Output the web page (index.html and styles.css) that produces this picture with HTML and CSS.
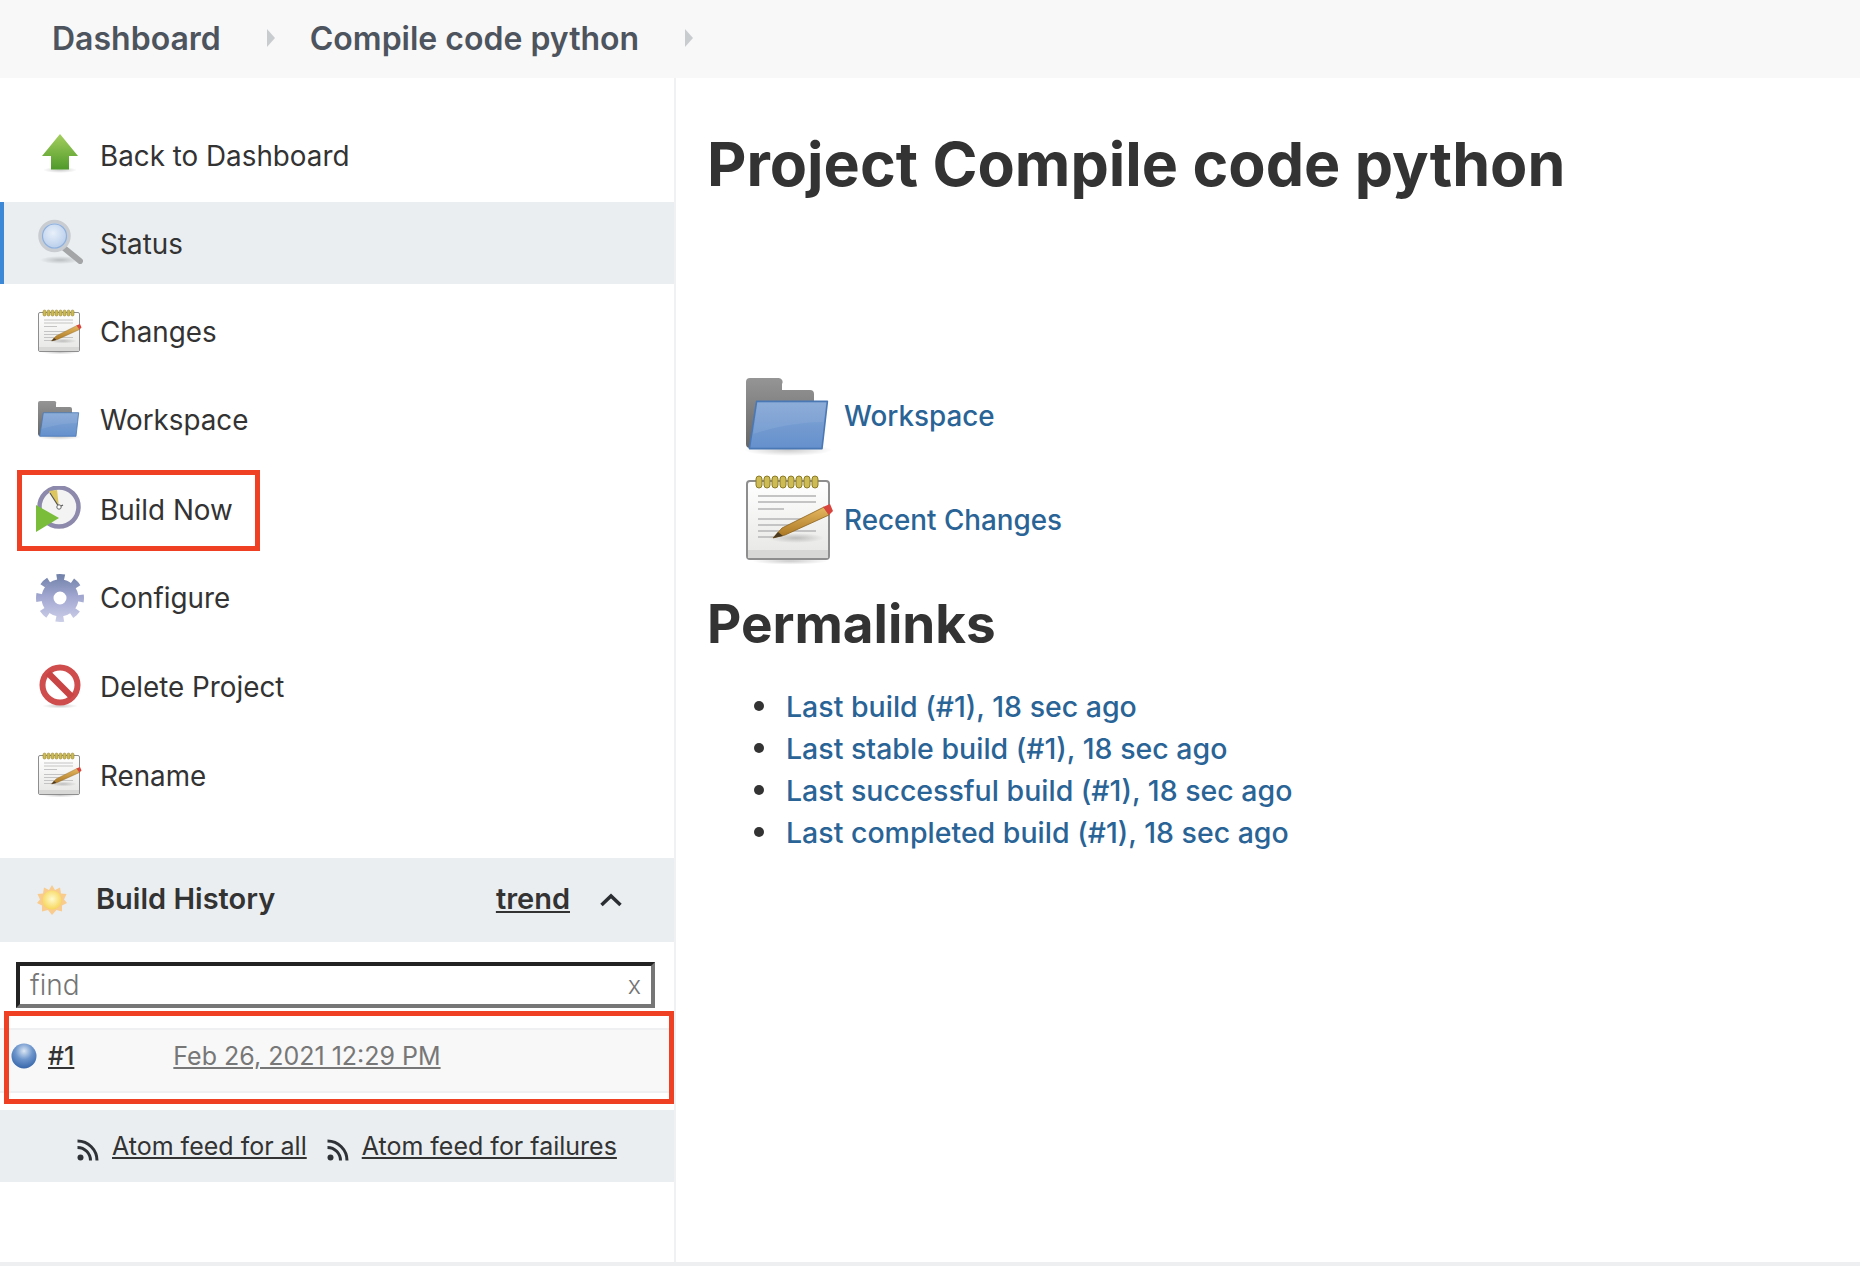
FILE: index.html
```html
<!DOCTYPE html>
<html lang="en">
<head>
<meta charset="utf-8">
<title>Compile code python</title>
<link rel="stylesheet" href="styles.css">
</head>
<body>
<svg class="defs" aria-hidden="true">
  <defs>
    <linearGradient id="g-arrow" x1="0" y1="0" x2="0" y2="1"><stop offset="0" stop-color="#a5cf5f"/><stop offset="1" stop-color="#4f9a2a"/></linearGradient>
    <radialGradient id="g-glass" cx=".45" cy=".4" r=".7"><stop offset="0" stop-color="#e8f0fa"/><stop offset="1" stop-color="#a9c3e6"/></radialGradient>
    <linearGradient id="g-paper" x1="0" y1="0" x2="0" y2="1"><stop offset="0" stop-color="#fff"/><stop offset="1" stop-color="#e6e6e4"/></linearGradient>
    <linearGradient id="g-fold" x1="0" y1="0" x2="0" y2="1"><stop offset="0" stop-color="#86a8d6"/><stop offset="1" stop-color="#6490cc"/></linearGradient>
    <linearGradient id="g-grey" x1="0" y1="0" x2="0" y2="1"><stop offset="0" stop-color="#959595"/><stop offset="1" stop-color="#666"/></linearGradient>
    <linearGradient id="g-pencil" x1="0" y1="0" x2="0" y2="1"><stop offset="0" stop-color="#e6b860"/><stop offset="1" stop-color="#a87420"/></linearGradient>
    <linearGradient id="g-gear" gradientUnits="userSpaceOnUse" x1="0" y1="0" x2="0" y2="48"><stop offset="0" stop-color="#6f80a8"/><stop offset=".5" stop-color="#a4a9d2"/><stop offset="1" stop-color="#cdcfe8"/></linearGradient>
    <radialGradient id="g-ball" cx=".5" cy=".3" r=".75"><stop offset="0" stop-color="#dbe6f4"/><stop offset=".45" stop-color="#6f97cd"/><stop offset="1" stop-color="#2f5fa5"/></radialGradient>
    <radialGradient id="g-sun" cx=".5" cy=".45" r=".55"><stop offset="0" stop-color="#fffbd0"/><stop offset="1" stop-color="#f7d65a"/></radialGradient>
    <radialGradient id="g-shadow"><stop offset="0" stop-color="#000" stop-opacity=".2"/><stop offset="1" stop-color="#000" stop-opacity="0"/></radialGradient>

    <symbol id="i-arrow" viewBox="0 0 48 48">
      <ellipse cx="24" cy="39" rx="17" ry="3" fill="url(#g-shadow)"/>
      <path d="M24 3 42 25H33V38.500H15V25H6Z" fill="url(#g-arrow)"/>
    </symbol>
    <symbol id="i-glass" viewBox="0 0 48 48">
      <ellipse cx="24" cy="41" rx="20" ry="4" fill="url(#g-shadow)"/>
      <path d="M28 29 44 42" stroke="#a3a5a7" stroke-width="6" stroke-linecap="round"/>
      <circle cx="18.500" cy="17" r="14.500" fill="url(#g-glass)" stroke="#c9ccd0" stroke-width="3.500"/>
      <circle cx="18.500" cy="17" r="12" fill="none" stroke="#8fb0dc" stroke-width="1.200"/>
    </symbol>
    <symbol id="i-note" viewBox="0 0 48 48">
      <ellipse cx="24" cy="44.500" rx="19" ry="1.800" fill="url(#g-shadow)"/>
      <rect x="2.500" y="4.500" width="41" height="39" rx="1.500" fill="url(#g-paper)" stroke="#8e8e8e"/>
      <rect x="3" y="39" width="40" height="4" fill="#d8d8d6"/>
      <g fill="#cdbb55" stroke="#8c7a25" stroke-width=".5">
        <rect x="7" y="2" width="3" height="6" rx="1.500"/><rect x="11" y="2" width="3" height="6" rx="1.500"/><rect x="15" y="2" width="3" height="6" rx="1.500"/><rect x="19" y="2" width="3" height="6" rx="1.500"/><rect x="23" y="2" width="3" height="6" rx="1.500"/><rect x="27" y="2" width="3" height="6" rx="1.500"/><rect x="31" y="2" width="3" height="6" rx="1.500"/><rect x="35" y="2" width="3" height="6" rx="1.500"/>
      </g>
      <g stroke="#c4c4c4" stroke-width="1">
        <path d="M8 12H37M8 15H37M8 18.500H21M8 23.500H37M8 26.500H25M8 29.500H37M8 32.500H17"/>
      </g>
      <ellipse cx="27" cy="33" rx="14" ry="2.500" fill="url(#g-shadow)"/>
      <path d="M15.500 33 20 28 41 17.500 43.500 21.500 21.500 31.500Z" fill="url(#g-pencil)" stroke="#8a611c" stroke-width=".4"/>
      <path d="M15.500 33 18 30 20.500 32Z" fill="#4a3a22"/>
      <path d="M40.500 17.500 44 16 45.500 19.500 43.500 21.500Z" fill="#d8453c"/>
    </symbol>
    <symbol id="i-folder" viewBox="0 0 48 48">
      <ellipse cx="23" cy="41" rx="22" ry="3" fill="url(#g-shadow)"/>
      <path d="M2 7a2 2 0 0 1 2-2H18a2 2 0 0 1 2 3V11H34a2 2 0 0 1 2 2V40H4a2 2 0 0 1-2-2Z" fill="url(#g-grey)"/>
      <path d="M7.300 16.700H42.700L40 40.300H3.700Z" fill="url(#g-fold)" stroke="#4a78b5" stroke-width=".8" stroke-linejoin="round"/>
      <path d="M7.800 17.400H42L40.800 27C30 27 18 29 5.600 33Z" fill="#fff" opacity=".07"/>
    </symbol>
    <symbol id="i-clock" viewBox="0 0 48 48">
      <circle cx="23" cy="21" r="19.500" fill="#f3f3f3" stroke="#8d89ac" stroke-width="4.500"/>
      <path d="M13 5 21 4 23 21Z" fill="#dcc65d"/>
      <path d="M14 7 23 21 27 19" fill="none" stroke="#555" stroke-width="1.200"/>
      <circle cx="23" cy="21" r="2.200" fill="#fff" stroke="#666"/>
      <path d="M0 19V46L23 32Z" fill="#79bd3b"/>
    </symbol>
    <symbol id="i-gear" viewBox="0 0 48 48">
      <circle cx="24" cy="24" r="21" fill="none" stroke="url(#g-gear)" stroke-width="6" stroke-dasharray="8 8.490" stroke-dashoffset="4"/>
      <circle cx="24" cy="24" r="12.500" fill="none" stroke="url(#g-gear)" stroke-width="12"/>
    </symbol>
    <symbol id="i-stop" viewBox="0 0 48 48">
      <ellipse cx="24" cy="44" rx="18" ry="2.500" fill="url(#g-shadow)"/>
      <circle cx="24" cy="23" r="17.500" fill="#fff" stroke="#cf4d4d" stroke-width="6"/>
      <path d="M12 11 36 35" stroke="#c94444" stroke-width="6.500"/>
    </symbol>
    <symbol id="i-sun" viewBox="0 0 32 32">
      <path d="M16 1 19 6 24 3.500 25 9.500 30.500 10 28 15.500 31 19 26 21.500 26 27.500 20.500 26 16 31 12 26 6 27.500 6 21.500 1 19 4 15.500 1.500 10 7 9.500 8 3.500 13 6Z" fill="#f9cb8d"/>
      <circle cx="16" cy="16" r="9.500" fill="url(#g-sun)"/>
    </symbol>
    <symbol id="i-ball" viewBox="0 0 26 26">
      <circle cx="13" cy="13" r="12.500" fill="url(#g-ball)"/>
    </symbol>
    <symbol id="i-rss" viewBox="0 0 22 22">
      <circle cx="3.500" cy="18.500" r="3" fill="#2f3337"/>
      <path d="M0.500 8.500A13 13 0 0 1 13.500 21.500M0.500 2A19.500 19.500 0 0 1 20 21.500" fill="none" stroke="#2f3337" stroke-width="3"/>
    </symbol>
  </defs>
</svg>

<header class="crumbs">
  <a class="crumb">Dashboard</a>
  <span class="crumb-arrow"></span>
  <a class="crumb">Compile code python</a>
  <span class="crumb-arrow"></span>
</header>

<div class="layout">
  <aside class="side">
    <nav class="tasks">
      <a class="task"><svg class="task-icon"><use href="#i-arrow"/></svg><span>Back to Dashboard</span></a>
      <a class="task is-active"><svg class="task-icon"><use href="#i-glass"/></svg><span>Status</span></a>
      <a class="task"><svg class="task-icon"><use href="#i-note"/></svg><span>Changes</span></a>
      <a class="task"><svg class="task-icon"><use href="#i-folder"/></svg><span>Workspace</span></a>
      <a class="task is-marked"><svg class="task-icon"><use href="#i-clock"/></svg><span>Build Now</span></a>
      <a class="task"><svg class="task-icon"><use href="#i-gear"/></svg><span>Configure</span></a>
      <a class="task"><svg class="task-icon"><use href="#i-stop"/></svg><span>Delete Project</span></a>
      <a class="task task-last"><svg class="task-icon"><use href="#i-note"/></svg><span>Rename</span></a>
    </nav>

    <section class="history">
      <div class="history-head">
        <svg class="sun"><use href="#i-sun"/></svg>
        <strong class="history-title">Build History</strong>
        <a class="trend">trend</a>
        <svg class="chevron" viewBox="0 0 24 14"><path d="M2.500 12 12 3 21.500 12" fill="none" stroke="#2b2e33" stroke-width="3.500"/></svg>
      </div>
      <div class="search">
        <div class="search-box"><span class="search-text">find</span><span class="search-x">x</span></div>
      </div>
      <div class="builds">
        <div class="build-row">
          <svg class="ball"><use href="#i-ball"/></svg>
          <a class="build-no">#1</a>
          <a class="build-date">Feb 26, 2021 12:29 PM</a>
        </div>
      </div>
      <div class="feeds">
        <svg class="rss"><use href="#i-rss"/></svg><a class="feed">Atom feed for all</a>
        <svg class="rss"><use href="#i-rss"/></svg><a class="feed">Atom feed for failures</a>
      </div>
    </section>
  </aside>

  <main class="content">
    <h1 class="title">Project Compile code python</h1>
    <div class="bigs">
      <div class="big"><svg class="big-icon"><use href="#i-folder"/></svg><a class="big-link">Workspace</a></div>
      <div class="big"><svg class="big-icon"><use href="#i-note"/></svg><a class="big-link">Recent Changes</a></div>
    </div>
    <h2 class="sub">Permalinks</h2>
    <ul class="perma">
      <li><a>Last build (#1), 18 sec ago</a></li>
      <li><a>Last stable build (#1), 18 sec ago</a></li>
      <li><a>Last successful build (#1), 18 sec ago</a></li>
      <li><a>Last completed build (#1), 18 sec ago</a></li>
    </ul>
  </main>
</div>
<div class="foot"></div>
</body>
</html>
```

FILE: styles.css
```css
*, *::before, *::after { box-sizing: border-box; }
html, body { margin: 0; height: 100%; }
body {
  position: relative;
  width: 1860px;
  height: 1266px;
  overflow: hidden;
  display: flex;
  flex-direction: column;
  background: #fff;
  color: #333;
  font-family: Inter, "Liberation Sans", sans-serif;
  font-size: 27.800px;
}
.defs { position: absolute; width: 0; height: 0; }

.crumbs {
  flex: 0 0 78px;
  display: flex;
  align-items: center;
  padding: 0 0 2px 52px;
  background: #f8f8f8;
  color: #4d545d;
  font-size: 32px;
  font-weight: 600;
}
.crumb-arrow {
  width: 0; height: 0;
  margin: 0 35px 0 46px;
  border-style: solid;
  border-width: 9px 0 9px 8px;
  border-color: transparent transparent transparent #c9cccf;
}

.layout { flex: 1; display: flex; min-height: 0; }

.side { flex: 0 0 676px; border-right: 2px solid #f0f1f2; display: flex; flex-direction: column; }
.tasks { padding-top: 37px; display: flex; flex-direction: column; }
.task {
  position: relative;
  height: 82px;
  margin-bottom: 6.300px;
  display: flex;
  align-items: center;
  padding-left: 36px;
  gap: 16px;
}
.task span { margin-top: 1px; }
.tasks .task:first-child { margin-top: -1px; }
.task-icon { width: 48px; height: 48px; flex: none; filter: blur(.5px); }
.is-active { background: #eaeef1; border-left: 4px solid #3c87d6; padding-left: 32px; }
.is-marked { margin-top: 1.500px; }
.is-marked::after {
  content: "";
  position: absolute;
  left: 17px; top: 1px;
  width: 243px; height: 81px;
  border: 5px solid #f04023;
}
.task-last { margin-top: .500px; margin-bottom: 0; }

.history { margin-top: 42px; }
.history-head {
  height: 84px;
  display: flex;
  align-items: center;
  padding: 0 0 4px 36px;
  background: #eaeef1;
  font-size: 29px;
}
.sun { width: 32px; height: 32px; margin-top: 4px; filter: blur(.5px); }
.history-title { margin-left: 28px; font-weight: 600; }
.trend { margin-left: auto; font-weight: 600; text-decoration: underline; }
.chevron { width: 24px; height: 14px; margin: 3px 51px 0 29px; }

.search { padding: 20px 19px 0 16px; }
.search-box {
  height: 46px;
  display: flex;
  justify-content: space-between;
  align-items: center;
  padding: 0 10px;
  border: 4px solid;
  border-color: #222 #767676 #767676 #222;
  color: #757575;
  font-size: 28px;
  font-weight: 300;
}
.search-x { font-size: 25px; }

.builds { position: relative; padding-top: 20px; }
.builds::after {
  content: "";
  position: absolute;
  left: 4px; top: 3px; right: 0; height: 93px;
  border: 5px solid #f04023;
}
.build-row {
  height: 65px;
  display: flex;
  align-items: flex-start;
  padding: 11px 0 0 11px;
  background: #f8f8f8;
  border-top: 2px solid #eef0f2;
  border-bottom: 2px solid #eef0f2;
  font-size: 25px;
}
.ball { width: 26px; height: 26px; flex: none; margin-top: 2px; filter: blur(.5px); }
.build-no { margin-left: 11px; font-weight: 500; text-decoration: underline; }
.build-date { margin-left: 99px; color: #777; text-decoration: underline; }

.feeds {
  margin-top: 17px;
  height: 72px;
  display: flex;
  align-items: center;
  padding-left: 77px;
  background: #eaeef1;
  font-size: 25px;
}
.rss { width: 22px; height: 22px; flex: none; margin-top: 8px; }
.feed { margin: 0 20px 0 13px; text-decoration: underline; }

.content { flex: 1; padding: 0 0 0 31px; }
.title { margin: 46px 0 0; font-size: 60.900px; line-height: 80px; font-weight: 700; }
.bigs { margin-top: 160px; padding-left: 35px; }
.big { height: 104px; display: flex; align-items: center; gap: 6px; }
.big-icon { width: 96px; height: 96px; flex: none; filter: blur(.4px); }
.big-link { color: #2a6496; font-size: 27.800px; font-weight: 500; }
.sub { margin: 17px 0 0; font-size: 53px; line-height: 70px; font-weight: 700; }
.perma { margin: 26px 0 0; padding: 0 0 0 47px; list-style: none; font-size: 28.500px; font-weight: 500; }
.perma li { height: 42px; display: flex; align-items: center; gap: 22px; }
.perma li::before { content: ""; flex: none; width: 10px; height: 10px; border-radius: 50%; background: #333; }
.perma a { color: #2a6496; }

.foot { flex: 0 0 4px; background: #eeeff0; }
```
